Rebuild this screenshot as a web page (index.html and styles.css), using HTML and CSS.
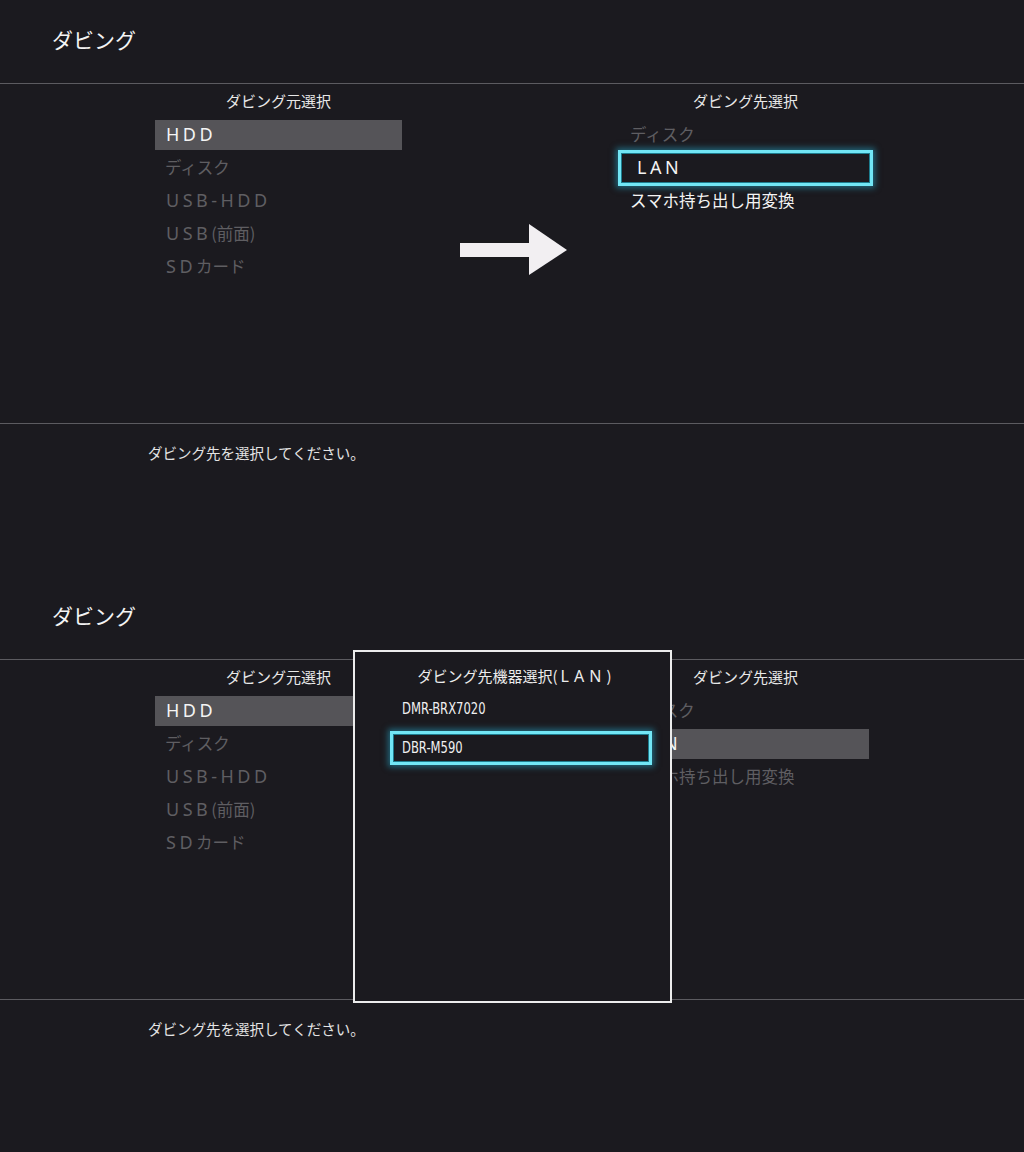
FILE: index.html
```html
<!DOCTYPE html>
<html lang="ja">
<head>
<meta charset="utf-8">
<title>ダビング</title>
<link rel="stylesheet" href="styles.css">
</head>
<body>
<section class="screen">
  <header class="top"><h1 class="title">ダビング</h1></header>
  <div class="main">
    <div class="col col-left">
      <div class="col-head">ダビング元選択</div>
      <ul class="list">
        <li class="row on bar"><span class="lat">HDD</span></li>
        <li class="row off">ディスク</li>
        <li class="row off"><span class="lat">USB-HDD</span></li>
        <li class="row off"><span class="lat">USB</span>(前面)</li>
        <li class="row off"><span class="lat">SD</span>カード</li>
      </ul>
    </div>
    <div class="mid">
      <svg class="arrow" width="108" height="52" viewBox="0 0 108 52"><rect x="0" y="19" width="71" height="14" fill="#f2eff2"/><polygon points="69,0 107,26 69,51" fill="#f2eff2"/></svg>
    </div>
    <div class="col col-right">
      <div class="col-head">ダビング先選択</div>
      <ul class="list">
        <li class="row off">ディスク</li>
        <li class="row on sel"><span class="lat">LAN</span></li>
        <li class="row on">スマホ持ち出し用変換</li>
      </ul>
    </div>
  </div>
  <p class="msg">ダビング先を選択してください。</p>
</section>

<section class="screen">
  <header class="top"><h1 class="title">ダビング</h1></header>
  <div class="main">
    <div class="col col-left">
      <div class="col-head">ダビング元選択</div>
      <ul class="list">
        <li class="row on bar"><span class="lat">HDD</span></li>
        <li class="row off">ディスク</li>
        <li class="row off"><span class="lat">USB-HDD</span></li>
        <li class="row off"><span class="lat">USB</span>(前面)</li>
        <li class="row off"><span class="lat">SD</span>カード</li>
      </ul>
    </div>
    <div class="mid"></div>
    <div class="col col-right">
      <div class="col-head">ダビング先選択</div>
      <ul class="list">
        <li class="row off">ディスク</li>
        <li class="row on bar inset"><span class="lat">LAN</span></li>
        <li class="row off">スマホ持ち出し用変換</li>
      </ul>
    </div>
  </div>
  <p class="msg">ダビング先を選択してください。</p>
  <div class="modal">
    <div class="modal-head">ダビング先機器選択(<span class="lat-s">LAN</span>)</div>
    <ul class="dev-list">
      <li class="dev"><span class="cond">DMR-BRX7020</span></li>
      <li class="dev sel"><span class="cond">DBR-M590</span></li>
    </ul>
  </div>
</section>
</body>
</html>
```
FILE: styles.css
```css
* { box-sizing: border-box; }
html, body { margin: 0; padding: 0; }
body {
  background: #1b1a1f;
  color: #f2f2f2;
  font-family: "Noto Sans CJK JP", "Noto Sans", sans-serif;
  width: 1024px;
}
ul { list-style: none; margin: 0; padding: 0; }

.screen {
  position: relative;
  height: 576px;
}

.top {
  height: 84px;
  border-bottom: 1px solid #5c5b60;
  padding-left: 52px;
  display: flex;
  align-items: center;
  padding-bottom: 6px;
}
.title {
  margin: 0;
  font-size: 21px;
  font-weight: 400;
  color: #f4f4f4;
  line-height: 28px;
}

.main {
  height: 340px;
  border-bottom: 1px solid #5c5b60;
  display: flex;
  padding-left: 155px;
  padding-top: 7px;
}
.col-left { width: 247px; }
.col-right { width: 251px; }
.mid {
  width: 218px;
  padding-left: 58px;
  padding-top: 133px;
}
.arrow { display: block; }

.col-head {
  text-align: center;
  font-size: 15px;
  line-height: 20px;
  color: #e8e8e8;
  margin-bottom: 9px;
}
.list {
  display: flex;
  flex-direction: column;
  gap: 3px;
}
.row {
  height: 30px;
  line-height: 28px;
  padding-left: 10px;
  font-size: 16.5px;
  white-space: nowrap;
  overflow: hidden;
}
.lat {
  font-family: "Noto Sans", sans-serif;
  font-size: 18px;
  letter-spacing: 3.5px;
  margin-left: 1px;
}
.row.on { color: #f4f4f4; }
.row.off { color: #5f5e62; }
.row.bar { background: #555458; }
.row.inset { padding-left: 15px; margin-right: 2px; }
.row.sel {
  padding-left: 14px;
  border: 1px solid #1d7c8e;
  box-shadow: 0 0 0 3px #72e6f5, 0 0 6px 5px rgba(40, 180, 215, 0.5);
  overflow: visible;
  margin: 0 1px;
  line-height: 26px;
}

.msg {
  margin: 19px 0 0 148px;
  font-size: 14.5px;
  line-height: 20px;
  color: #e4e4e4;
}

.modal {
  position: absolute;
  left: 353px;
  top: 74px;
  width: 319px;
  height: 353px;
  border: 2px solid #ececec;
  background: #1b1a1f;
  padding: 12px 0 0 38px;
}
.modal-head {
  text-align: center;
  margin-left: -38px;
  padding-left: 4px;
  font-size: 15px;
  line-height: 24px;
  color: #ececec;
}
.lat-s {
  font-family: "Noto Sans", sans-serif;
  font-size: 16px;
  letter-spacing: 5px;
  margin-left: 3px;
}
.dev-list {
  margin-top: 7px;
  display: flex;
  flex-direction: column;
  gap: 11px;
  width: 256px;
}
.dev {
  height: 28px;
  line-height: 28px;
  padding-left: 9px;
  font-family: "DejaVu Sans Condensed", "Liberation Sans Narrow", "Liberation Sans", sans-serif;
  font-stretch: condensed;
  font-size: 16.5px;
  color: #f0f0f0;
  white-space: nowrap;
}
.cond {
  display: inline-block;
  transform: scaleX(0.78);
  transform-origin: left center;
}
.dev.sel {
  border: 1px solid #1d7c8e;
  box-shadow: 0 0 0 3px #72e6f5, 0 0 6px 5px rgba(40, 180, 215, 0.5);
  line-height: 26px;
  padding-left: 8px;
}
```
